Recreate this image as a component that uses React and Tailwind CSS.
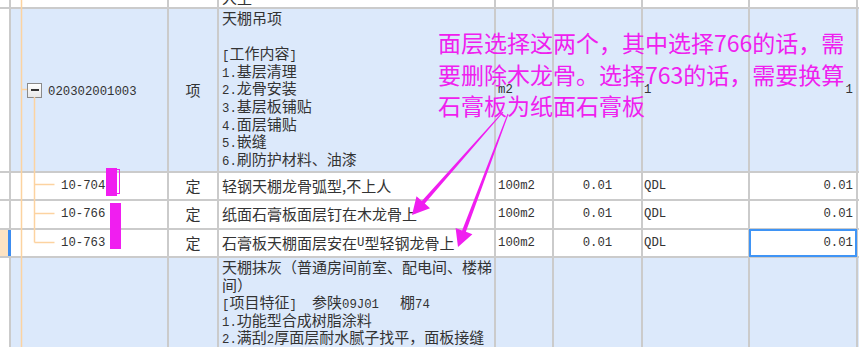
import React from "react";

const GRID = "grid grid-cols-[9px_156px_48px_275px_56px_87px_105px_106px_1px] grid-rows-[7px_162px_26px_27px_26px_1fr] gap-[2px] w-[859px] h-[347px]";

function M({ children }) {
  return <span className="font-['Liberation_Mono',monospace] text-[12.3px]">{children}</span>;
}

function L({ children }) {
  return <div className="h-[17.6px] leading-[17.6px] whitespace-nowrap">{children}</div>;
}

function C({ bg = "bg-white", className = "", children }) {
  return <div className={`${bg} ${className} min-w-0 overflow-hidden`}>{children}</div>;
}

function arrow(x1, y1, x2, y2, w0 = 1, w1 = 4, hl = 17, hw = 9) {
  const dx = x2 - x1, dy = y2 - y1, len = Math.hypot(dx, dy);
  const ux = dx / len, uy = dy / len, nx = -uy, ny = ux;
  const bx = x2 - ux * hl, by = y2 - uy * hl;
  const p = (x, y) => `${x.toFixed(1)},${y.toFixed(1)}`;
  return [
    p(x1 + (nx * w0) / 2, y1 + (ny * w0) / 2),
    p(bx + (nx * w1) / 2, by + (ny * w1) / 2),
    p(bx + nx * hw, by + ny * hw),
    p(x2, y2),
    p(bx - nx * hw, by - ny * hw),
    p(bx - (nx * w1) / 2, by - (ny * w1) / 2),
    p(x1 - (nx * w0) / 2, y1 - (ny * w0) / 2),
  ].join(" ");
}

const BLUE = "bg-[#dce9fb]";

function SubRow({ code, name, selected }) {
  return (
    <>
      <C bg={selected ? "bg-[#fde3c3]" : "bg-white"} className={selected ? "border-r border-[#3c8cf0] shadow-[2px_0_0_#3c8cf0] relative z-10" : ""} />
      <C className="flex items-center pl-[50px]"><M>{code}</M></C>
      <C className="flex items-center justify-center">定</C>
      <C className="flex items-center pl-[3px] whitespace-nowrap">{name}</C>
      <C className="flex items-center pl-[2px]"><M>100m2</M></C>
      <C className="flex items-center justify-center"><M>0.01</M></C>
      <C className="flex items-center pl-[1px]"><M>QDL</M></C>
      <div className={`bg-white flex items-center justify-end pr-[3px] min-w-0 ${selected ? "relative z-10 outline-2 outline-solid outline-offset-[-1px] outline-[#3f94f5]" : "overflow-hidden"}`}>
        <M>0.01</M>
      </div>
      <C />
    </>
  );
}

export default function App() {
  return (
    <div className="relative w-[859px] h-[347px] overflow-hidden bg-[#cbcbcb] text-[#333333] font-['Noto_Sans_CJK_SC',sans-serif] text-[15px]">
      <div className={GRID}>
        {/* Row A */}
        <C /><C /><C />
        <C className="pl-[3px]">
          <div className="-mt-[11px]"><L>人工</L></div>
        </C>
        <C /><C /><C /><C /><C />

        {/* Row B */}
        <C />
        <C bg={BLUE} className="flex items-center pl-[16px]">
          <div className="w-[15px] h-[15px] border border-[#8a8a8a] bg-gradient-to-b from-white to-[#e8e8e8] flex items-center justify-center shrink-0">
            <div className="w-[8px] h-[1.5px] bg-[#333333]" />
          </div>
          <div className="ml-[6px]"><M>020302001003</M></div>
        </C>
        <C bg={BLUE} className="flex items-center justify-center">项</C>
        <C bg={BLUE} className="pl-[3px]">
          <L>天棚吊项</L>
          <L>&nbsp;</L>
          <L><M>[</M>工作内容<M>]</M></L>
          <L><M>1.</M>基层清理</L>
          <L><M>2.</M>龙骨安装</L>
          <L><M>3.</M>基层板铺贴</L>
          <L><M>4.</M>面层铺贴</L>
          <L><M>5.</M>嵌缝</L>
          <L><M>6.</M>刷防护材料、油漆</L>
        </C>
        <C bg={BLUE} className="flex items-center pl-[2px]"><M>m2</M></C>
        <C bg={BLUE} />
        <C bg={BLUE} className="flex items-center pl-[1px]"><M>1</M></C>
        <C bg={BLUE} className="flex items-center justify-end pr-[3px]"><M>1</M></C>
        <C bg={BLUE} />

        <SubRow code="10-704" name="轻钢天棚龙骨弧型,不上人" />
        <SubRow code="10-766" name="纸面石膏板面层钉在木龙骨上" />
        <SubRow code="10-763" name={<>石膏板天棚面层安在<M>U</M>型轻钢龙骨上</>} selected />

        {/* Row F */}
        <C />
        <C bg={BLUE} />
        <C bg={BLUE} />
        <C bg={BLUE} className="pl-[3px]">
          <L>天棚抹灰（普通房间前室、配电间、楼梯</L>
          <L>间）</L>
          <L>
            <span className="inline-block w-[90px]"><M>[</M>项目特征<M>]</M></span>
            <span className="inline-block w-[88px]">参陕<M>09J01</M></span>
            <span>棚<M>74</M></span>
          </L>
          <L><M>1.</M>功能型合成树脂涂料</L>
          <L><M>2.</M>满刮<M>2</M>厚面层耐水腻子找平，面板接缝</L>
        </C>
        <C bg={BLUE} /><C bg={BLUE} /><C bg={BLUE} /><C bg={BLUE} /><C bg={BLUE} />
      </div>

      {/* tree connector lines */}
      <svg className="absolute left-0 top-0 pointer-events-none" width="859" height="347">
        <g stroke="#fcd3a0" strokeWidth="1.5" fill="none">
          <line x1="21.5" y1="0" x2="21.5" y2="347" />
          <line x1="21.5" y1="89.5" x2="27" y2="89.5" />
          <line x1="34.5" y1="97" x2="34.5" y2="242.5" />
          <line x1="34.5" y1="184.5" x2="54.5" y2="184.5" />
          <line x1="34.5" y1="213.5" x2="54.5" y2="213.5" />
          <line x1="34.5" y1="242.5" x2="54.5" y2="242.5" />
        </g>
      </svg>

      {/* redaction marks */}
      <div className="absolute left-[106px] top-[168px] w-[11px] h-[28px] bg-[#f01ef0]" />
      <div className="absolute left-[116px] top-[169px] w-[4px] h-[25px] border border-[#f01ef0]" />
      <div className="absolute left-[110px] top-[203px] w-[11px] h-[46px] bg-[#f01ef0]" />

      {/* annotation */}
      <div className="absolute left-[438px] top-[27px] text-[23px] leading-[31.5px] text-[#ef20ef] whitespace-nowrap">
        <div>面层选择这两个，其中选择766的话，需</div>
        <div>要删除木龙骨。选择763的话，需要换算</div>
        <div>石膏板为纸面石膏板</div>
      </div>

      <svg className="absolute left-0 top-0 pointer-events-none" width="859" height="347">
        <polygon points={arrow(503, 112, 412, 215)} fill="#f01ef0" />
        <polygon points={arrow(508, 114, 458, 247)} fill="#f01ef0" />
      </svg>
    </div>
  );
}
